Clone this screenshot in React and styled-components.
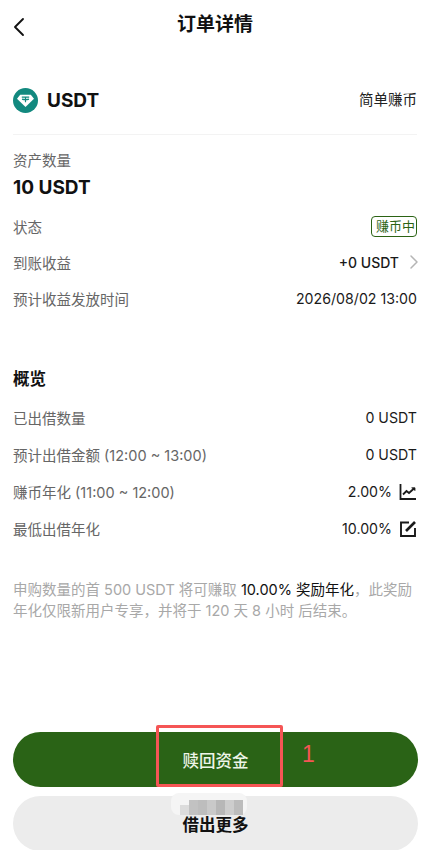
import React from 'react';
import styled, { createGlobalStyle } from 'styled-components';
import { ChevronLeft, ChevronRight } from 'lucide-react';

const GlobalStyle = createGlobalStyle`
    html, body {
        margin: 0;
        padding: 0;
        background: #fff;
    }
    body {
        font-family: "Inter", "Noto Sans CJK SC", sans-serif;
        color: #111;
    }
`;

const Page = styled.div`
    width: 428px;
    height: 850px;
    overflow: hidden;
    position: relative;
    display: flex;
    flex-direction: column;
    padding: 0 11px 0 13px;
    box-sizing: border-box;
`;

const Header = styled.header`
    height: 50px;
    display: flex;
    align-items: center;
    justify-content: center;
    position: relative;
    margin-bottom: 27px;
`;

const BackButton = styled.span`
    position: absolute;
    left: -10px;
    top: 11px;
    display: flex;
    color: #111;
`;

const Title = styled.h1`
    margin: 0;
    font-size: 19px;
    font-weight: 700;
    line-height: 50px;
`;

const CoinRow = styled.div`
    height: 46px;
    display: flex;
    align-items: center;
    justify-content: space-between;
    padding-bottom: 11px;
    border-bottom: 1px solid #f3f3f3;
    box-sizing: content-box;
`;

const Coin = styled.div`
    display: flex;
    align-items: center;
    gap: 9px;
    font-size: 19px;
    font-weight: 700;
`;

const Product = styled.span`
    font-size: 14.5px;
    color: #222;
    margin-bottom: 3px;
`;

const Muted = styled.span`
    font-size: 14.5px;
    color: #666;
`;

const Amount = styled.div`
    display: flex;
    flex-direction: column;
    margin-top: 14px;
    margin-bottom: 8px;
`;

const AmountValue = styled.div`
    font-size: 19px;
    font-weight: 700;
    line-height: 24px;
    margin-top: 6px;
`;

const Row = styled.div`
    height: ${({ $h }) => $h || 36}px;
    display: flex;
    align-items: center;
    justify-content: space-between;
`;

const Value = styled.span`
    display: flex;
    align-items: center;
    gap: ${({ $gap }) => $gap || 0}px;
    font-size: 14.2px;
    color: #1a1a1a;
    font-weight: ${({ $bold }) => ($bold ? 500 : 400)};
`;

const Earned = styled(Value)`
    font-size: 14px;
    margin-right: -9px;
`;

const Tag = styled.span`
    font-size: 13px;
    line-height: 19px;
    color: #2b6314;
    border: 1px solid #2b6314;
    border-radius: 4px;
    padding: 0 1px 0 4px;
`;

const SectionTitle = styled.h2`
    margin: 51px 0 8px;
    font-size: 16.5px;
    font-weight: 700;
    line-height: 24px;
`;

const Note = styled.p`
    margin: 32px 0 0;
    font-size: 14.5px;
    line-height: 21px;
    color: #a8a8a8;

    strong {
        font-weight: 400;
        color: #111;
    }
`;

const Actions = styled.div`
    margin-top: auto;
    display: flex;
    flex-direction: column;
    gap: 9px;
    margin-bottom: -1px;
`;

const Button = styled.button`
    height: 55px;
    width: 405px;
    border: none;
    border-radius: 28px;
    font-family: inherit;
    font-size: 16.5px;
    font-weight: ${({ $primary }) => ($primary ? 500 : 700)};
    padding: 0;
    background: ${({ $primary }) => ($primary ? '#2a6316' : '#ececec')};
    color: ${({ $primary }) => ($primary ? '#eef5e8' : '#111')};
`;

const RedFrame = styled.div`
    position: absolute;
    left: 156px;
    top: 725px;
    width: 127px;
    height: 62px;
    box-sizing: border-box;
    border: 3px solid #f55555;
    border-radius: 2px;
    pointer-events: none;
`;

const RedNumber = styled.span`
    position: absolute;
    left: 302px;
    top: 741px;
    font-family: "Liberation Sans", sans-serif;
    font-size: 23px;
    line-height: 26px;
    color: #f55555;
`;

const BlurPatch = styled.div`
    position: absolute;
    left: 171px;
    top: 793px;
    width: 76px;
    height: 22px;
    border-radius: 8px;
    background: #f5f5f5;
    display: flex;
    align-items: flex-end;
    padding-left: 9px;
    box-sizing: border-box;
`;

const BlurCell = styled.i`
    display: block;
    width: 9px;
    height: ${({ $h }) => $h}px;
    background: ${({ $c }) => $c};
`;

const TetherIcon = () => (
    <svg width="25" height="25" viewBox="0 0 25 25">
        <circle cx="12.500" cy="12.500" r="12.500" fill="#12897f" />
        <path d="M7.200 6.800h10.600l3.200 4-8.500 8.200-8.500-8.200z" fill="#fff" />
        <path d="M8.800 9.200h7.400M12.500 9.200v5M9 11.200c2.200 .6 4.800 .6 7 0" fill="none" stroke="#12897f" strokeWidth="1.200" />
    </svg>
);

const ChartIcon = () => (
    <svg width="18" height="18" viewBox="0 0 18 18" fill="none" stroke="#1a1a1a" strokeWidth="1.800">
        <path d="M1.500 1v15h15.500" />
        <path d="M4 11.500l3.500-3.500 2.500 2 5-4.500" />
        <path d="M12.500 4.800h3.500v3" fill="#1a1a1a" strokeWidth="0.800" />
    </svg>
);

const EditIcon = () => (
    <svg width="18" height="18" viewBox="0 0 18 18" fill="none" stroke="#1a1a1a" strokeWidth="1.900">
        <path d="M10 2.500H2v13.500h14V8" />
        <path d="M7 11l9-9" strokeWidth="2.600" />
    </svg>
);

const blurCells = [
    ['#dcdcdc', 12], ['#c2c2c2', 17], ['#bdbdbd', 17], ['#c9c9c9', 17],
    ['#b7b7b7', 17], ['#cdcdcd', 17], ['#bcbcbc', 17],
];

const App = () => {
    return (
        <Page>
            <GlobalStyle />
            <Header>
                <BackButton><ChevronLeft size={32} strokeWidth={1.400} /></BackButton>
                <Title>订单详情</Title>
            </Header>

            <CoinRow>
                <Coin><TetherIcon />USDT</Coin>
                <Product>简单赚币</Product>
            </CoinRow>

            <Amount>
                <Muted>资产数量</Muted>
                <AmountValue>10 USDT</AmountValue>
            </Amount>

            <Row>
                <Muted>状态</Muted>
                <Tag>赚币中</Tag>
            </Row>
            <Row>
                <Muted>到账收益</Muted>
                <Earned $bold $gap={3}>+0 USDT <ChevronRight size={24} color="#b5b5b5" strokeWidth={1.500} /></Earned>
            </Row>
            <Row>
                <Muted>预计收益发放时间</Muted>
                <Value>2026/08/02 13:00</Value>
            </Row>

            <SectionTitle>概览</SectionTitle>
            <Row $h={37}>
                <Muted>已出借数量</Muted>
                <Value>0 USDT</Value>
            </Row>
            <Row $h={37}>
                <Muted>预计出借金额 (12:00 ~ 13:00)</Muted>
                <Value>0 USDT</Value>
            </Row>
            <Row $h={37}>
                <Muted>赚币年化 (11:00 ~ 12:00)</Muted>
                <Value $gap={7}>2.00% <ChartIcon /></Value>
            </Row>
            <Row $h={37}>
                <Muted>最低出借年化</Muted>
                <Value $gap={7}>10.00% <EditIcon /></Value>
            </Row>

            <Note>
                申购数量的首 500 USDT 将可赚取 <strong>10.00% 奖励年化</strong>，此奖励年化仅限新用户专享，并将于 120 天 8 小时 后结束。
            </Note>

            <Actions>
                <Button $primary>赎回资金</Button>
                <Button>借出更多</Button>
            </Actions>

            <RedFrame />
            <RedNumber>1</RedNumber>
            <BlurPatch>
                {blurCells.map(([c, h], i) => <BlurCell key={i} $c={c} $h={h - 2} />)}
            </BlurPatch>
        </Page>
    );
};

export default App;
